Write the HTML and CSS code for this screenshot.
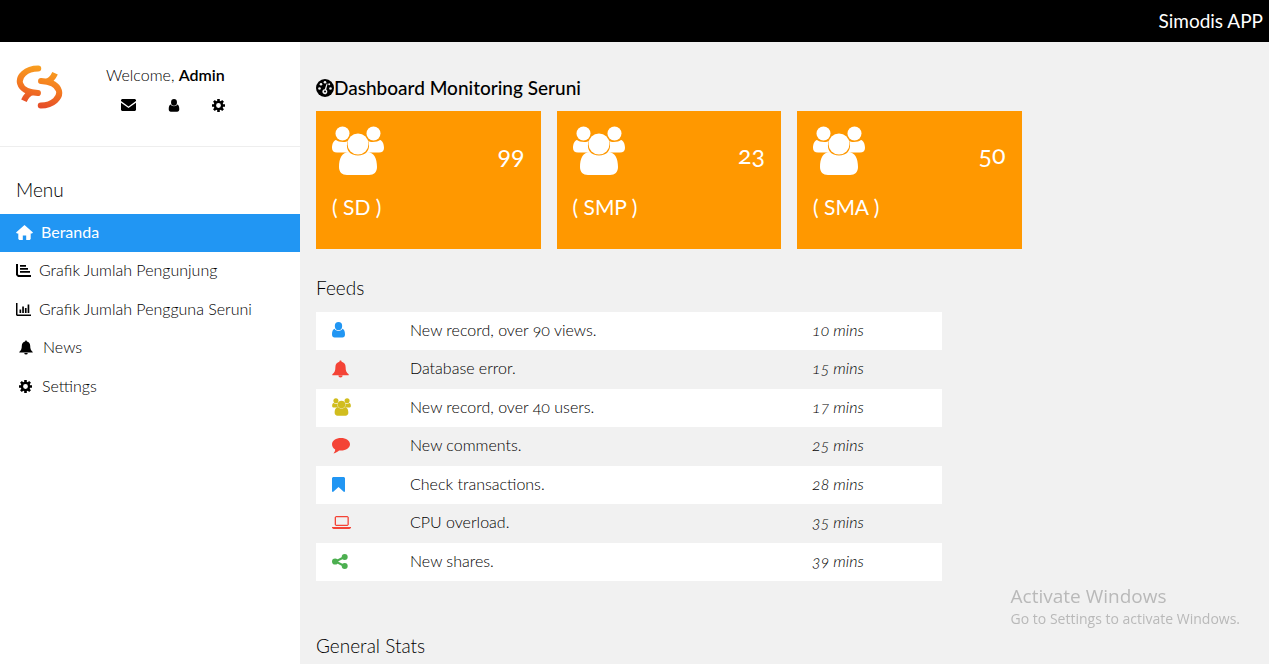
FILE: index.html
```html
<!DOCTYPE html>
<html lang="id">
<head>
<meta charset="utf-8">
<meta name="viewport" content="width=device-width, initial-scale=1">
<title>Simodis APP</title>
<link rel="stylesheet" href="styles.css">
</head>
<body>
<svg class="sprite" aria-hidden="true">
  <symbol id="user" viewBox="0 0 13 16"><rect x="2.900" y="0" width="7.200" height="8.200" rx="3.600"/><path d="M2.600 6.800C3.400 9.600 9.600 9.600 10.400 6.800C12.300 7.400 13 9.600 13 12.600C13 14.500 12 15.600 10.400 15.600H2.600C1 15.600 0 14.500 0 12.600C0 9.600 .7 7.400 2.600 6.800z"/></symbol>
  <symbol id="bell" viewBox="0 0 16 16"><path d="M8 0c.7 0 1.100.5 1 1.200 2.300.5 3.800 2.300 3.800 4.800 0 3.500.8 5.400 2.900 7v.8H.3V13c2.100-1.600 2.900-3.500 2.900-7C3.200 3.500 4.700 1.700 7 1.200 6.900.5 7.300 0 8 0zM6 14.200h4a2 1.800 0 0 1-4 0z"/></symbol>
  <symbol id="cog" viewBox="0 0 14 14"><g fill="none" stroke="currentColor"><circle cx="7" cy="7" r="3.900" stroke-width="2.600"/><path stroke-width="2.800" d="M7 0v2.500M7 11.500V14M0 7h2.500M11.500 7H14M2.100 2.100l1.700 1.700M10.200 10.200l1.700 1.700M2.100 11.900l1.700-1.700M10.200 3.800l1.700-1.700"/></g></symbol>
  <symbol id="users" viewBox="0 0 52 50"><circle cx="10.500" cy="7.500" r="7"/><circle cx="41.500" cy="7.500" r="7"/><path d="M4 14c2 2 10 3 12 .5-2 5-1 9 1.500 12H5c-3 0-5-1.500-5-4.500 0-4 1.500-7.500 4-8zM48 14c-2 2-10 3-12 .5 2 5 1 9-1.500 12H47c3 0 5-1.500 5-4.500 0-4-1.500-7.500-4-8z"/><circle cx="26" cy="18" r="10.500"/><path d="M17 26c4 4.500 14 4.500 18 0 7 0 10 6.500 10 15 0 5-3 8-8 8H15c-5 0-8-3-8-8 0-8.500 3-15 10-15z"/></symbol>
</svg>

<header class="topbar"><span class="brand">Simodis APP</span></header>

<div class="layout">
  <nav class="sidebar">
    <div class="profile">
      <svg class="logo" viewBox="15 15 148 144" aria-label="Seruni" role="img">
        <defs>
          <linearGradient id="flame" gradientUnits="userSpaceOnUse" x1="100" y1="20" x2="70" y2="150"><stop offset="0" stop-color="#f9a11f"/><stop offset=".5" stop-color="#f47b20"/><stop offset="1" stop-color="#e4492a"/></linearGradient>
        </defs>
        <g fill="none" stroke="url(#flame)" stroke-width="19" stroke-linecap="round">
          <path d="M85 29C45 29 22 55 28 76C34 96 55 104 84 106"/>
          <path d="M93 145C133 145 156 119 150 98C144 78 123 70 94 68"/>
          <path d="M68 103C56 106 48 112 40 130" stroke-linecap="butt"/>
          <path d="M110 71C122 68 130 62 138 44" stroke-linecap="butt"/>
        </g>
      </svg>
      <div class="account">
        <div>Welcome, <strong>Admin</strong></div>
        <div class="shortcuts">
          <a href="#" aria-label="Messages"><svg class="i-mail" viewBox="0 0 15 12"><path d="M1 0h13l1 1v1L7.500 7.400 0 2V1zM0 3.800l7.500 5.300L15 3.800V11l-1 1H1l-1-1z"/></svg></a>
          <a href="#" aria-label="Profile"><svg class="i-user"><use href="#user"/></svg></a>
          <a href="#" aria-label="Settings"><svg class="i-cog"><use href="#cog"/></svg></a>
        </div>
      </div>
    </div>
    <h5 class="menu-title">Menu</h5>
    <ul class="menu">
      <li><a class="active" href="#"><svg class="m-home" viewBox="0 0 17 15"><path d="M8.500 0 17 7.400l-1 1.100h-1.300V14l-1 1h-3.500v-4.500H6.800V15H3.300l-1-1V8.500H1L0 7.400z"/></svg>Beranda</a></li>
      <li><a href="#"><svg class="m-chart" viewBox="0 0 15 13"><path d="M0 0h2v10.300l.7.700H15v2H2L0 11zM4 1h6v1.700H4zM4 4h8v1.700H4zM4 7h10v1.700H4z"/></svg>Grafik Jumlah Pengunjung</a></li>
      <li><a href="#"><svg class="m-chart" viewBox="0 0 15 13"><path d="M0 0h1.500v11.500H15V13H1L0 12zM3.500 6.500h1.700V10H3.500zM6.200 3.500h1.700V10H6.200zM8.900 5h1.700v5H8.900zM11.600 1.500h1.700V10h-1.700z"/></svg>Grafik Jumlah Pengguna Seruni</a></li>
      <li><a class="inset" href="#"><svg class="m-bell"><use href="#bell"/></svg>News</a></li>
      <li><a class="inset" href="#"><svg class="m-cog"><use href="#cog"/></svg>Settings</a></li>
    </ul>
  </nav>

  <main class="content">
    <h5 class="page-title"><svg viewBox="0 0 18 18"><circle cx="9" cy="9" r="9"/><g fill="#f1f1f1"><circle cx="3.500" cy="9.500" r="1.300"/><circle cx="5" cy="5.200" r="1.300"/><circle cx="9" cy="3.300" r="1.300"/><circle cx="14.500" cy="9.500" r="1.300"/><circle cx="13.200" cy="5.300" r="1"/><path d="M11.600 4.800 10.200 10.600a2.500 2.500 0 1 1-1.500-.4L10.700 4.600z"/></g><circle cx="9" cy="12.500" r="1"/></svg>Dashboard Monitoring Seruni</h5>

    <div class="cards">
      <section class="card"><div class="card-top"><svg><use href="#users"/></svg><span class="count">99</span></div><h4>( SD )</h4></section>
      <section class="card"><div class="card-top"><svg><use href="#users"/></svg><span class="count">23</span></div><h4>( SMP )</h4></section>
      <section class="card"><div class="card-top"><svg><use href="#users"/></svg><span class="count">50</span></div><h4>( SMA )</h4></section>
    </div>

    <h5 class="feeds-title">Feeds</h5>
    <table class="feeds">
      <tbody>
        <tr><td class="blue"><svg class="f-user"><use href="#user"/></svg></td><td>New record, over 90 views.</td><td><i>10 mins</i></td></tr>
        <tr><td class="red"><svg class="f-bell"><use href="#bell"/></svg></td><td>Database error.</td><td><i>15 mins</i></td></tr>
        <tr><td class="yellow"><svg class="f-users"><use href="#users"/></svg></td><td>New record, over 40 users.</td><td><i>17 mins</i></td></tr>
        <tr><td class="red"><svg class="f-comment" viewBox="0 0 18 16"><path d="M9 0c5 0 9 2.700 9 6.300s-4 6.300-9 6.300c-.7 0-1.300 0-1.900-.1C5.500 14 3.700 15 1.500 15.400c.9-1 1.600-2.100 1.700-3.900C1.200 10.300 0 8.500 0 6.300 0 2.700 4 0 9 0z"/></svg></td><td>New comments.</td><td><i>25 mins</i></td></tr>
        <tr><td class="blue"><svg class="f-mark" viewBox="0 0 13 15"><path d="M1 0h11l1 1v13.500l-1 .5-5.500-5L1 15l-1-.5V1z"/></svg></td><td>Check transactions.</td><td><i>28 mins</i></td></tr>
        <tr><td class="red"><svg class="f-laptop" viewBox="0 0 19 13"><path fill-rule="evenodd" d="M4 0h11.500l1.300 1.300v7.400L15.500 10H4L2.700 8.700V1.300zM4 1.200v7.600h11.500V1.200zM0 11h19v1l-1.500 1h-16L0 12z"/></svg></td><td>CPU overload.</td><td><i>35 mins</i></td></tr>
        <tr><td class="green"><svg class="f-share" viewBox="0 0 16 15"><path d="M12.500 3 3.500 7.500l9 4.500" fill="none" stroke="currentColor" stroke-width="2"/><circle cx="12.700" cy="3" r="3"/><circle cx="3.100" cy="7.500" r="3.100"/><circle cx="12.700" cy="12" r="3"/></svg></td><td>New shares.</td><td><i>39 mins</i></td></tr>
      </tbody>
    </table>

    <h5 class="stats-title">General Stats</h5>
  </main>
</div>

<aside class="watermark"><div class="watermark-title">Activate Windows</div><div>Go to Settings to activate Windows.</div></aside>
</body>
</html>
```
FILE: styles.css
```css
* { box-sizing: border-box; }

body {
  margin: 0;
  min-height: 100vh;
  background: #f1f1f1;
  color: #000;
  font: 300 16px/1.5 Lato, "Open Sans", sans-serif;
  font-variant-numeric: oldstyle-nums;
  overflow: hidden;
}

svg { fill: currentColor; flex: none; }
a { color: inherit; text-decoration: none; }
h4, h5 { margin: 0; font-weight: 300; }
h5 { font-size: 19px; line-height: 27px; }
.sprite { position: absolute; width: 0; height: 0; }

.topbar {
  display: flex;
  justify-content: flex-end;
  padding: 7px 6px 8px;
  background: #000;
  color: #fff;
  font-size: 19px;
  font-weight: 400;
  line-height: 27px;
}

.layout { display: flex; min-height: calc(100vh - 42px); }

.sidebar { width: 300px; flex: none; background: #fff; }
.profile {
  display: flex;
  gap: 43px;
  height: 105px;
  padding: 21px 16px 0;
  border-bottom: 1px solid #eee;
}
.logo { width: 47px; height: 46px; margin-top: 1px; }
.account strong { font-weight: 600; }
.shortcuts { display: flex; align-items: center; height: 36px; padding-left: 15px; gap: 32px; }
.shortcuts a { display: flex; }
.i-mail { width: 15px; height: 12px; }
.i-user { width: 12px; height: 13px; }
.i-cog { width: 13px; height: 13px; }

.menu-title { padding: 29px 16px 11px; }
.menu { margin: 0; padding: 0; list-style: none; }
.menu a { display: flex; align-items: center; gap: 8px; padding: 6px 16px 8px; line-height: 1.53; }
.menu a.active { background: #2196f3; color: #fff; font-weight: 400; }
.menu a.inset { gap: 10px; padding-left: 19px; }
.m-home { width: 17px; height: 15px; }
.m-chart { width: 15px; height: 13px; }
.m-bell { width: 14px; height: 15px; }
.m-cog { width: 13px; height: 13px; }

.content { flex: 1; padding: 32px 7px 0 16px; }
.page-title { display: flex; align-items: center; margin-bottom: 10px; font-weight: 500; }
.page-title svg { width: 18px; height: 18px; }

.cards { display: grid; grid-template-columns: repeat(4, 1fr); gap: 16px; }
.card { height: 138px; padding: 15px 16px; background: #ff9800; color: #fff; }
.card-top { display: flex; justify-content: space-between; }
.card-top svg { width: 52px; height: 50px; }
.count { padding-top: 10px; font-size: 25px; line-height: 36px; font-weight: 400; }
.card h4 { margin-top: 16px; font-size: 21px; line-height: 30px; font-weight: 400; }

.feeds-title { margin: 25px 0 11px; }
.feeds {
  width: calc((100% + 16px) * 2 / 3 - 15px);
  border-collapse: collapse;
  table-layout: fixed;
}
.feeds tr:nth-child(odd) { background: #fff; }
.feeds td { padding: 6px 8px 8px; line-height: 1.53; }
.feeds td:first-child { width: 86px; padding-left: 16px; }
.feeds td:nth-child(2) { width: 402px; }
.feeds svg { display: block; }
.f-user { width: 13px; height: 16px; }
.f-bell { width: 17px; height: 18px; }
.f-users { width: 19px; height: 18px; }
.f-comment { width: 18px; height: 16px; }
.f-mark { width: 13px; height: 15px; }
.f-laptop { width: 19px; height: 13px; }
.f-share { width: 16px; height: 15px; }
.blue { color: #2196f3; }
.red { color: #f44336; }
.yellow { color: #d1bd1e; }
.green { color: #4caf50; }

.stats-title { margin-top: 51px; }

.watermark {
  position: fixed;
  right: 29px;
  bottom: 35px;
  color: #b9b9b9;
  font: 400 14px/20px "Open Sans", "Noto Sans", sans-serif;
}
.watermark-title { font-size: 19px; line-height: 26px; }
```
